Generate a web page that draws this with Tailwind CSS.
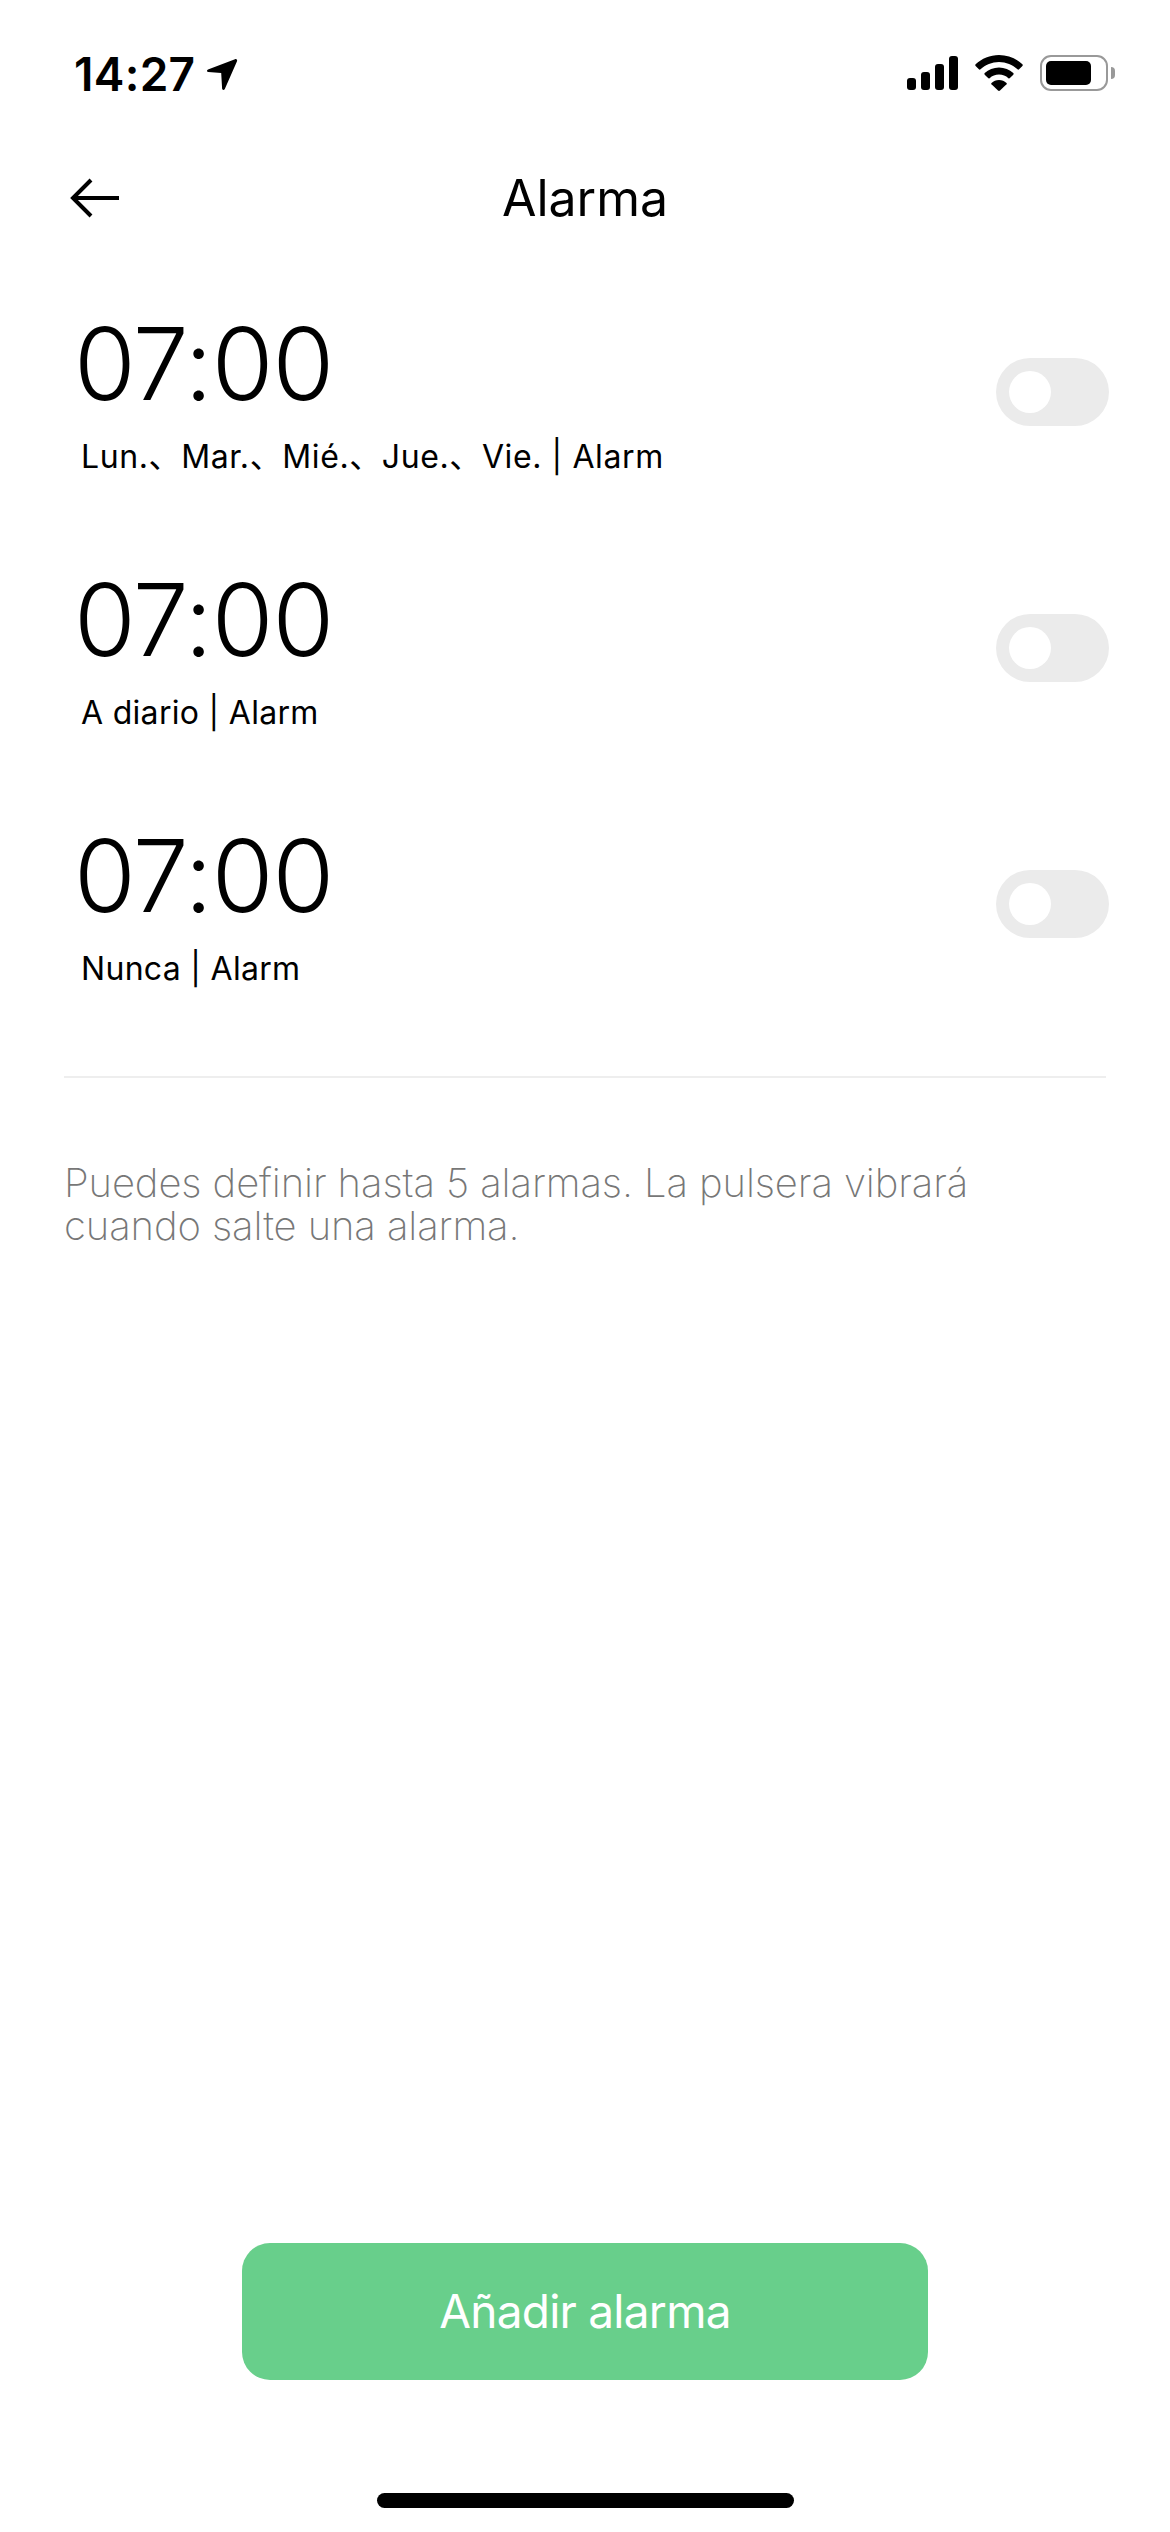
<!DOCTYPE html>
<html lang="en">
<head>
    <meta charset="UTF-8">
    <meta name="viewport" content="width=device-width, initial-scale=1.0">
    <title>Alarma</title>
    <script src="https://cdn.jsdelivr.net/npm/@tailwindcss/browser@4"></script>
</head>
<body class="bg-white text-black font-['Inter','Noto_Sans_CJK_SC',sans-serif]">
    <div class="w-[1170px] h-[2532px] flex flex-col overflow-hidden">
        <!-- status bar -->
        <div class="h-[148px] pt-[47px] pl-[74px] pr-[55px] flex justify-between items-start shrink-0">
            <div class="flex items-center gap-[11px]">
                <span class="text-[46px] leading-[54px] font-semibold tracking-[0.300px]">14:27</span>
                <svg class="w-[32px] h-[33px]" viewBox="0 0 32 33"><path d="M29 1.200 2 11.600c-1.600.7-1.200 2.500.4 2.500l12.800.9.9 15.500c.1 1.700 2 2 2.700.4L31 3.200c.6-1.400-.6-2.600-2-2z" fill="#000"/></svg>
            </div>
            <div class="flex items-center gap-[17px] mt-[8px]">
                <div class="flex items-end gap-[5px] h-[34px]">
                    <div class="w-[9px] h-[12px] bg-black rounded-[3px]"></div>
                    <div class="w-[9px] h-[18px] bg-black rounded-[3px]"></div>
                    <div class="w-[9px] h-[26px] bg-black rounded-[3px]"></div>
                    <div class="w-[9px] h-[34px] bg-black rounded-[3px]"></div>
                </div>
                <svg class="w-[48px] h-[36px]" viewBox="0 0 48 36"><path d="M24 0C15 0 6.800 3.500.6 9.300c-.5.500-.5 1.100 0 1.600l3.300 3.400c.5.500 1.100.5 1.600 0C10.400 9.700 16.900 6.900 24 6.900s13.600 2.800 18.500 7.400c.5.500 1.100.5 1.600 0l3.300-3.400c.5-.5.500-1.100 0-1.600C41.200 3.500 33 0 24 0z" fill="#000"/><path d="M24 12.500c-5.500 0-10.500 2.100-14.300 5.600-.5.500-.5 1.100 0 1.600l3.400 3.400c.5.500 1 .5 1.500.1 2.500-2.200 5.800-3.600 9.400-3.600s6.900 1.400 9.400 3.600c.5.400 1 .4 1.500-.1l3.400-3.400c.5-.5.500-1.100 0-1.600-3.800-3.500-8.800-5.600-14.300-5.600z" fill="#000"/><path d="M24 25c-2.900 0-5.500 1.100-7.500 2.900-.4.400-.4 1 0 1.400l6.500 6.300c.6.500 1.400.5 2 0l6.500-6.300c.4-.4.4-1 0-1.400-2-1.800-4.600-2.900-7.500-2.900z" fill="#000"/></svg>
                <div class="flex items-center gap-[3px]">
                    <div class="w-[68px] h-[36px] rounded-[11px] border-2 border-[#999] p-[4px] pr-[15px]">
                        <div class="h-full bg-black rounded-[5px]"></div>
                    </div>
                    <div class="w-[4px] h-[12px] bg-[#999] rounded-r-[4px]"></div>
                </div>
            </div>
        </div>

        <!-- header -->
        <div class="h-[100px] px-[70px] flex items-center relative shrink-0">
            <svg class="w-[50px] h-[40px]" viewBox="0 0 50 40"><path d="M49 20H3M21 2 3 20l18 18" fill="none" stroke="#000" stroke-width="4"/></svg>
            <div class="absolute inset-x-0 text-center text-[50px] leading-[60px] font-normal">Alarma</div>
        </div>

        <!-- alarms -->
        <div class="pt-[44px] pl-[74px] pr-[61px] flex flex-col gap-[56px]">
            <div class="flex justify-between items-center h-[200px]">
                <div class="pb-[4px]">
                    <div class="text-[100px] leading-[120px] font-[350] tracking-[-1px]">07:00</div>
                    <div class="text-[32px] leading-[40px] mt-[13px] pl-[7px] tracking-[0.600px]">Lun.、Mar.、Mié.、Jue.、Vie. | Alarm</div>
                </div>
                <div class="w-[113px] h-[68px] rounded-full bg-[#ebebeb] pl-[13px] flex items-center"><div class="w-[42px] h-[42px] rounded-full bg-white"></div></div>
            </div>
            <div class="flex justify-between items-center h-[200px]">
                <div class="pb-[4px]">
                    <div class="text-[100px] leading-[120px] font-[350] tracking-[-1px]">07:00</div>
                    <div class="text-[32px] leading-[40px] mt-[13px] pl-[7px] tracking-[0.300px]">A diario | Alarm</div>
                </div>
                <div class="w-[113px] h-[68px] rounded-full bg-[#ebebeb] pl-[13px] flex items-center"><div class="w-[42px] h-[42px] rounded-full bg-white"></div></div>
            </div>
            <div class="flex justify-between items-center h-[200px]">
                <div class="pb-[4px]">
                    <div class="text-[100px] leading-[120px] font-[350] tracking-[-1px]">07:00</div>
                    <div class="text-[32px] leading-[40px] mt-[13px] pl-[7px] tracking-[0.300px]">Nunca | Alarm</div>
                </div>
                <div class="w-[113px] h-[68px] rounded-full bg-[#ebebeb] pl-[13px] flex items-center"><div class="w-[42px] h-[42px] rounded-full bg-white"></div></div>
            </div>
        </div>

        <div class="mt-[72px] mx-[64px] h-[2px] bg-[#eeeeee] shrink-0"></div>

        <p class="mt-[83px] mx-[64px] text-[40px] leading-[43px] font-extralight tracking-[-0.100px] text-[#777777]">Puedes definir hasta 5 alarmas. La pulsera vibrará<br>cuando salte una alarma.</p>

        <!-- bottom -->
        <div class="mt-auto flex flex-col items-center pb-[24px]">
            <button class="w-[686px] h-[137px] rounded-[28px] bg-[#68cf8b] text-white text-[46px] font-normal tracking-[-0.750px]">Añadir alarma</button>
            <div class="mt-[113px] w-[417px] h-[15px] rounded-full bg-black"></div>
        </div>
    </div>
</body>
</html>
